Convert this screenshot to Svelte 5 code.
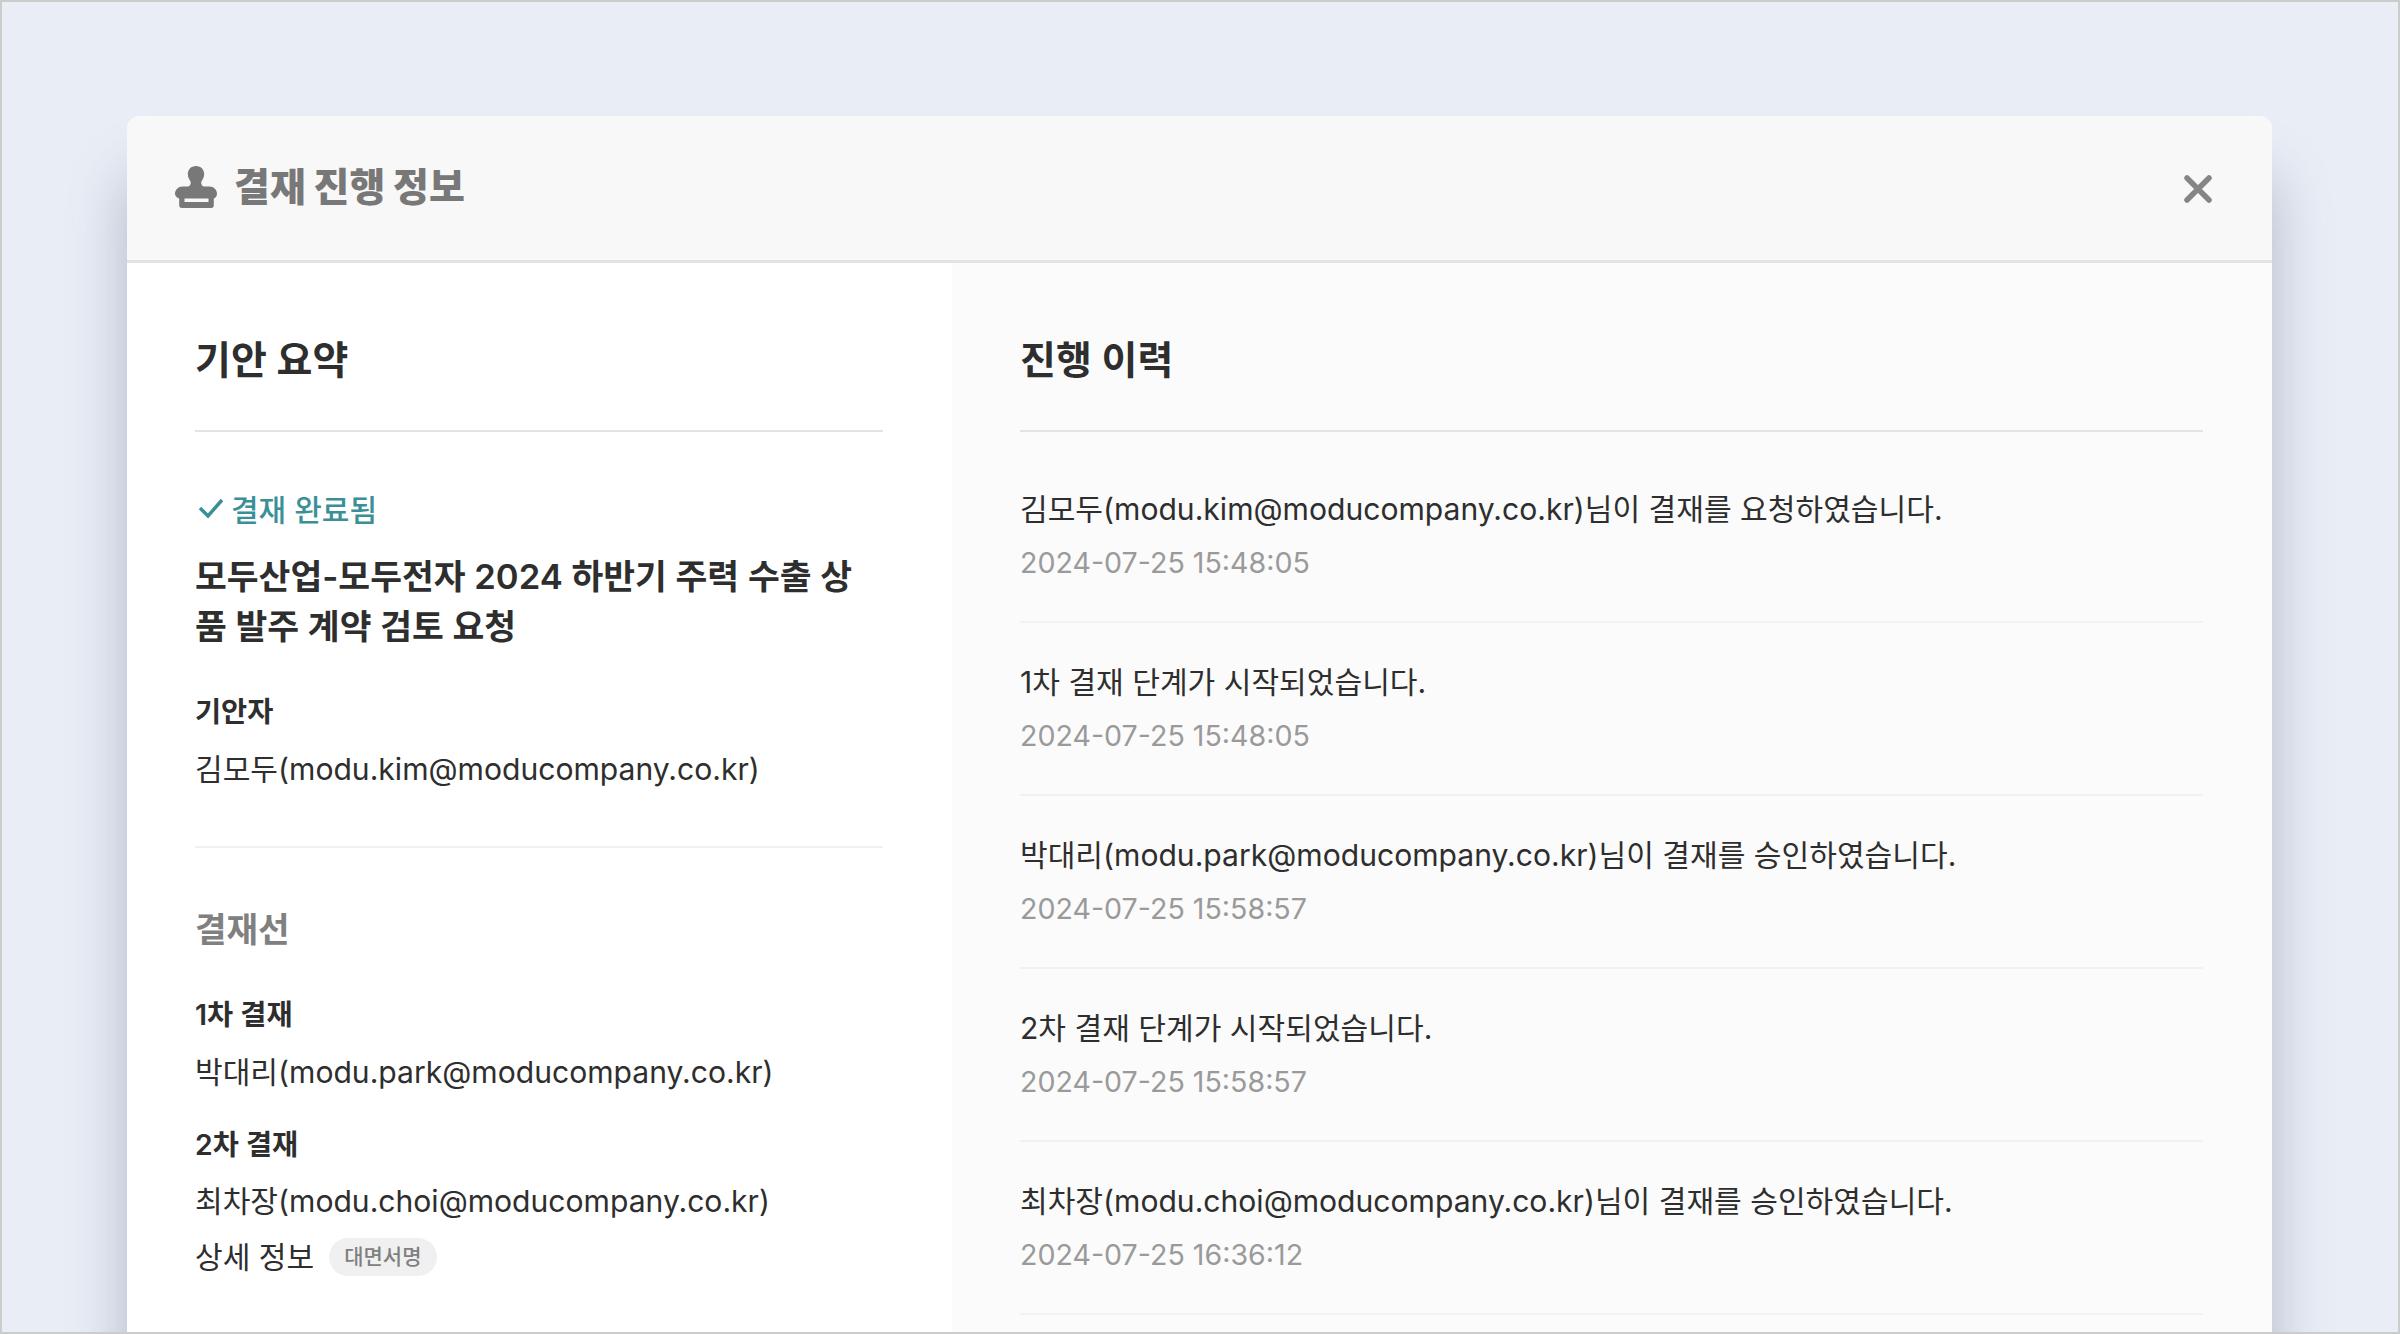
<script>
  const history = [
    ['김모두(modu.kim@moducompany.co.kr)님이 결재를 요청하였습니다.', '2024-07-25 15:48:05'],
    ['1차 결재 단계가 시작되었습니다.', '2024-07-25 15:48:05'],
    ['박대리(modu.park@moducompany.co.kr)님이 결재를 승인하였습니다.', '2024-07-25 15:58:57'],
    ['2차 결재 단계가 시작되었습니다.', '2024-07-25 15:58:57'],
    ['최차장(modu.choi@moducompany.co.kr)님이 결재를 승인하였습니다.', '2024-07-25 16:36:12']
  ];
</script>

<div class="page">
  <div class="modal">
    <header class="head">
      <svg class="stamp" viewBox="0 0 42 42" width="42" height="42" aria-hidden="true">
        <path fill="#787878" fill-rule="evenodd" d="M21 0c4.800 0 8.200 3.600 8.200 8 0 3.300-1.500 5.300-2.600 7.300-.9 1.700-.2 4.700 2.400 5.200h5.500c4.300 0 7.500 3.600 7.500 7 0 2.700-1.300 4.300-3.200 5V39.500c0 1.400-1.100 2.500-2.500 2.500H6.700c-1.400 0-2.500-1.100-2.500-2.500V32.500C1.600 31.600 0 30 0 27.500c0-3.400 3.200-7 7.500-7H13c2.600-.5 3.300-3.500 2.400-5.200-1.100-2-2.600-4-2.600-7.300C12.800 3.600 16.200 0 21 0zM9.500 32.500v3.500h24v-3.500z"/>
      </svg>
      <h1>결재 진행 정보</h1>
      <svg class="close" viewBox="0 0 28 28" width="28" height="28" aria-hidden="true">
        <path d="M3 3l22 22M25 3L3 25" stroke="#858585" stroke-width="5.500" stroke-linecap="round" fill="none"/>
      </svg>
    </header>
    <div class="cols">
      <section class="left">
        <h2>기안 요약</h2>
        <div class="rule"></div>
        <div class="status">
          <svg viewBox="0 0 26 22" width="26" height="22" aria-hidden="true"><path d="M2 11l8 8L24 3" stroke="#3b8f97" stroke-width="3.500" fill="none"/></svg>
          <span>결재 완료됨</span>
        </div>
        <h3>모두산업-모두전자 2024 하반기 주력 수출 상품 발주 계약 검토 요청</h3>
        <div class="label first">기안자</div>
        <div class="val">김모두(modu.kim@moducompany.co.kr)</div>
        <div class="rule light"></div>
        <div class="line-title">결재선</div>
        <div class="label">1차 결재</div>
        <div class="val">박대리(modu.park@moducompany.co.kr)</div>
        <div class="label second">2차 결재</div>
        <div class="val tight">최차장(modu.choi@moducompany.co.kr)</div>
        <div class="detail"><span class="detail-label">상세 정보</span><span class="tag">대면서명</span></div>
      </section>
      <section class="right">
        <h2>진행 이력</h2>
        <div class="rule"></div>
        <ul>
          {#each history as [msg, time]}
            <li><div class="msg">{msg}</div><div class="time">{time}</div></li>
          {/each}
        </ul>
      </section>
    </div>
  </div>
  <div class="frame"></div>
</div>

<style>
  :global(body) { margin: 0; }
  .page {
    position: relative;
    width: 2400px;
    height: 1334px;
    overflow: hidden;
    background: #e9eef6;
    box-sizing: border-box;
    padding: 116px 128px 0 127px;
    font-family: Inter, "Noto Sans CJK KR", sans-serif;
    color: #2e2e2e;
  }
  .frame {
    position: absolute;
    inset: 0;
    border: 2px solid #cccccc;
    pointer-events: none;
  }
  .modal {
    border-radius: 13px 13px 0 0;
    background: #fff;
    box-shadow: 0 60px 60px rgba(60, 70, 100, 0.32);
    height: 1400px;
    overflow: hidden;
  }
  .head {
    height: 147px;
    box-sizing: border-box;
    border-bottom: 3px solid #e3e3e3;
    background: #f8f8f8;
    display: flex;
    align-items: center;
    padding: 0 60px 0 48px;
  }
  .stamp { margin-top: -2px; }
  h1 {
    flex: 1;
    margin: -8px 0 0 17px;
    font-size: 39px;
    font-weight: 900;
    color: #787878;
  }
  .close { margin-top: 2px; }
  .cols { display: flex; height: 1253px; }
  .left { width: 825px; box-sizing: border-box; padding: 73px 69px 0 68px; background: #fff; }
  .right { flex: 1; padding: 73px 69px 0 68px; background: #fbfbfb; }
  h2 {
    margin: 0;
    font-size: 39px;
    line-height: 48px;
    font-weight: 600;
    color: #2e2e2e;
  }
  .rule { height: 2px; background: #e3e3e3; margin-top: 46px; }
  .status {
    margin-top: 57px;
    height: 38px;
    display: flex;
    align-items: center;
    gap: 7px;
    color: #3b8f97;
    font-size: 30px;
    font-weight: 500;
  }
  .status svg { margin-left: 3px; }
  h3 {
    margin: 24px 0 0;
    font-size: 34.6px;
    line-height: 50px;
    font-weight: 600;
    word-break: break-all;
  }
  .label { font-size: 28.4px; line-height: 38px; font-weight: 600; }
  .label.first { margin-top: 42px; }
  .label.second { margin-top: 34px; }
  .val { font-size: 30.1px; line-height: 40px; margin-top: 18px; }
  .val.tight { margin-top: 17px; }
  .rule.light { background: #f1f1f1; margin-top: 57px; }
  .line-title { margin-top: 59px; font-size: 34.3px; line-height: 46px; font-weight: 600; color: #808080; }
  .line-title + .label { margin-top: 43px; }
  .detail { display: flex; align-items: center; margin-top: 17px; font-size: 30.1px; }
  .detail-label { line-height: 38px; }
  .tag {
    margin-left: 15px;
    height: 38px;
    line-height: 38px;
    padding: 0 15px;
    border-radius: 19px;
    background: #f0f0f0;
    color: #808080;
    font-size: 21px;
    font-weight: 500;
  }
  ul { list-style: none; margin: 0; padding: 18px 0 0; }
  li { box-sizing: border-box; padding: 39px 0 38px; border-bottom: 2px solid #f1f1f1; }
  .msg { font-size: 30.1px; line-height: 40px; }
  .time { font-size: 28.6px; line-height: 40px; margin-top: 14px; color: #9a9a9a; }
</style>
